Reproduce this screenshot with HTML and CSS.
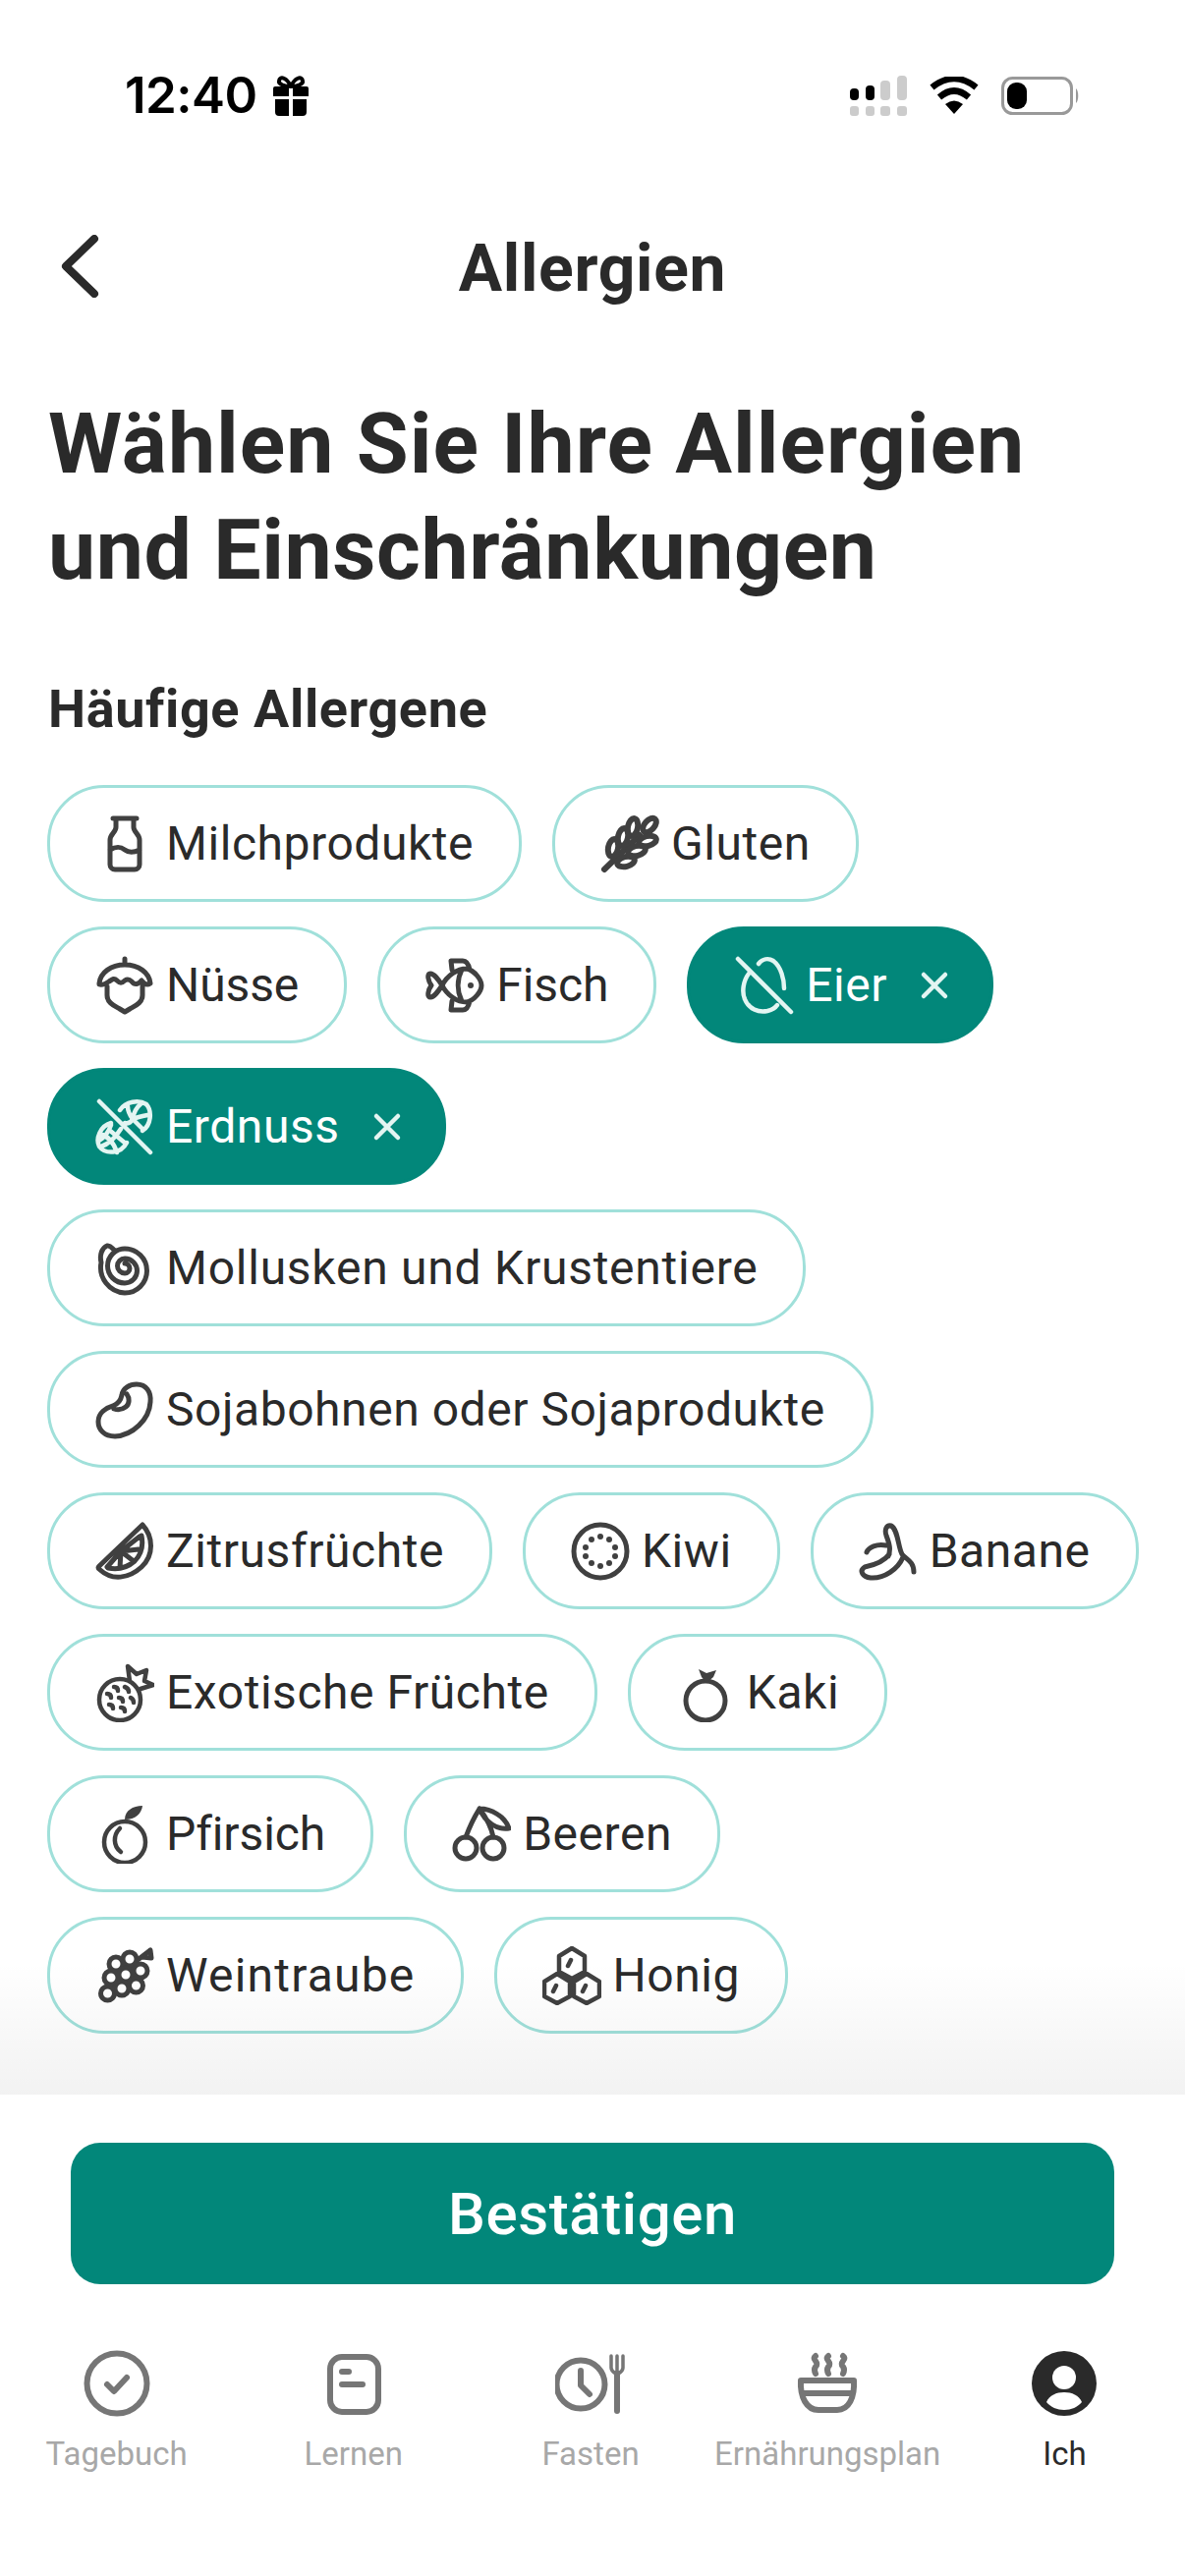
FILE: index.html
```html
<!DOCTYPE html>
<html lang="de">
<head>
<meta charset="utf-8">
<title>Allergien</title>
<link rel="stylesheet" href="styles.css">
</head>
<body>
<div class="page">
  <div class="status">
    <div class="status-left">
      <span class="time">12:40</span>
      <svg class="gift" viewBox="0 0 38 42"><path class="gift-loop" d="M19 12C15 3 8 1 7 6c-1 4 6 6 12 6zM19 12c4-9 11-11 12-6 1 4-6 6-12 6z"/><path d="M1 14a2 2 0 0 1 2-2h14v10H1zM21 12h14a2 2 0 0 1 2 2v8H21zM3 25h14v17H7a4 4 0 0 1-4-4zM21 25h14v13a4 4 0 0 1-4 4H21z"/></svg>
    </div>
    <div class="status-right">
      <svg class="signal" viewBox="0 0 58 41"><rect x="0" y="13" width="9" height="12" rx="4"/><rect x="16" y="10" width="9" height="15" rx="4"/><rect class="off" x="31" y="5" width="10" height="20" rx="4"/><rect class="off" x="48" y="0" width="10" height="25" rx="4"/><rect class="off" x="0" y="31" width="9" height="10" rx="3"/><rect class="off" x="16" y="31" width="9" height="10" rx="3"/><rect class="off" x="31" y="31" width="10" height="10" rx="3"/><rect class="off" x="48" y="31" width="10" height="10" rx="3"/></svg>
      <svg class="wifi" viewBox="0 0 50 38"><path d="M25 38 16 28Q25 21 34 28Z"/><path class="arc" d="M10 21Q25 8 40 21"/><path class="arc" d="M2.500 11Q25-7 47.500 11"/></svg>
      <svg class="battery" viewBox="0 0 81 39"><rect class="shell" x="1.500" y="1.500" width="70" height="36" rx="10"/><rect x="6" y="6" width="20" height="27" rx="9"/><path class="nub" d="M76 12c3 2 3 13 0 15z"/></svg>
    </div>
  </div>

  <header class="nav">
    <svg class="back" viewBox="0 0 40 64"><path d="M35 4 6 32l29 28"/></svg>
    <span class="nav-title">Allergien</span>
  </header>

  <main class="content">
    <h1 class="headline">Wählen Sie Ihre Allergien<br><span class="headline-b">und Einschränkungen</span></h1>
    <h2 class="section">Häufige Allergene</h2>
    <div class="chips">
      <div class="chip"><svg class="ico" viewBox="0 0 60 60"><path d="M18 4h24M21 5v8c0 5-6 7-6 13v25a5 5 0 0 0 5 5h20a5 5 0 0 0 5-5V26c0-6-6-8-6-13V5M15 36c7-4 11-3 15 0s9 3 15 0"/></svg><span>Milchprodukte</span></div>
      <div class="chip"><svg class="ico ico-thick" viewBox="0 0 60 60"><path d="M4 56 40 21"/><ellipse cx="50" cy="11" rx="5" ry="8.500" transform="rotate(42 50 11)"/><ellipse cx="33" cy="13" rx="5" ry="9" transform="rotate(12 33 13)"/><ellipse cx="48" cy="27" rx="5" ry="9" transform="rotate(76 48 27)"/><ellipse cx="23" cy="23" rx="5" ry="9" transform="rotate(12 23 23)"/><ellipse cx="37" cy="37" rx="5" ry="9" transform="rotate(76 37 37)"/><ellipse cx="13" cy="34" rx="5" ry="9" transform="rotate(12 13 34)"/><ellipse cx="26" cy="48" rx="5" ry="9" transform="rotate(76 26 48)"/></svg><span>Gluten</span></div>
      <div class="chip ls-tight"><svg class="ico" viewBox="0 0 60 60"><path d="M30 3v6M4 28C5 17 16 9 30 9s25 8 26 19c-3 2-6 1-9-3-3 4-7 5-10 1-2-2-4-3-7-1-3 3-5 3-8 0-3-3-5-1-8 1-3 2-7 4-10 3zM12 31v9c0 8 8 11 13 14l5 3 5-3c5-3 13-6 13-14v-9"/></svg><span>Nüsse</span></div>
      <div class="chip ls-tight"><svg class="ico" viewBox="0 0 60 60"><path d="M17 30C13 24 9 18 5 18 1 18 3 26 6 30 3 34 1 42 5 42c4 0 8-6 12-12zM17 30c5-10 15-17 25-17 8 2 15 11 15 17s-7 15-15 17c-10 0-20-7-25-17zM37 14c-5 10-5 22 0 32M27 14l-1-9h12c4 0 6 4 7 9M27 46l-1 9h12c4 0 6-4 7-9"/><circle class="fill" cx="46" cy="30" r="3"/></svg><span>Fisch</span></div>
      <div class="chip chip-on"><svg class="ico" viewBox="0 0 60 60"><path d="M3 3l54 54M24 8c4-5 10-6 15-3 8 6 11 19 11 28M14 18c-6 8-7 19-4 26 4 10 14 14 23 12 4-1 8-3 10-6"/></svg><span>Eier</span><svg class="x" viewBox="0 0 36 36"><path d="M7 7l22 22M29 7 7 29"/></svg></div>
      <div class="chip chip-on"><svg class="ico" viewBox="0 0 60 60"><path d="M4 4l52 52M25 13C31 4 44 2 52 7c6 7 5 21-4 27M33 9c0 5 2 9 5 13l9 9M47 6c-5 4-8 9-9 16-2 4-5 5-8 4M53 18c-5 1-10 2-15 4M16 26C5 29 0 42 4 50c6 8 22 8 28-4M5 37c7 2 13 7 17 19M16 28c-2 6-6 12-12 16M26 32c-5 8-11 15-20 18M14 33l17 14"/></svg><span>Erdnuss</span><svg class="x" viewBox="0 0 36 36"><path d="M7 7l22 22M29 7 7 29"/></svg></div>
      <div class="chip ls-mid"><svg class="ico" viewBox="0 0 60 60"><path d="M30 25A5 5 0 0 1 30 35 7.500 7.500 0 0 1 30 20 12.500 12.500 0 0 1 30 45 17.500 17.500 0 0 1 30 10 22.500 22.500 0 0 1 30 55 26 26 0 0 1 6 24C4 16 7 9 12 7c4-1 5 3 8 5"/></svg><span>Mollusken und Krustentiere</span></div>
      <div class="chip"><svg class="ico" viewBox="0 0 60 60"><path d="M42 4c10 0 15 8 14 18-1 18-18 34-36 35C9 57 3 50 3 42c0-9 8-14 15-16 5-2 8-6 9-11 1-7 8-11 15-11zM32 14c3 4 3 10-1 13-4 3-9 3-12 2"/></svg><span>Sojabohnen oder Sojaprodukte</span></div>
      <div class="chip"><svg class="ico" viewBox="0 0 60 60"><path d="M48 3c11 12 12 31-1 43C34 58 17 60 5 49c-3-2-2-3-1-4zM47 14c2 10 0 19-7 26-8 7-17 9-27 7M26 30 12 46M26 30l-1 17M26 30l13 10M26 30l18-2M26 30l19-15"/></svg><span>Zitrusfrüchte</span></div>
      <div class="chip"><svg class="ico" viewBox="0 0 60 60"><circle cx="30" cy="30" r="27"/><g class="fill"><circle cx="30" cy="15" r="3"/><circle cx="39" cy="18" r="3"/><circle cx="45" cy="26" r="3"/><circle cx="45" cy="35" r="3"/><circle cx="39" cy="42" r="3"/><circle cx="30" cy="45" r="3"/><circle cx="21" cy="42" r="3"/><circle cx="15" cy="35" r="3"/><circle cx="15" cy="26" r="3"/><circle cx="21" cy="18" r="3"/></g></svg><span>Kiwi</span></div>
      <div class="chip"><svg class="ico" viewBox="0 0 60 60"><path d="M56 51c0-11-8-13-12-18-4-7-4-25-11-29-5-1-7 4-5 10 3 8 5 14 2 21M8 31c2-5 10-9 20-7M45 36c-5 12-19 22-33 21-8-1-12-7-6-11 10-2 20-6 25-13"/></svg><span>Banane</span></div>
      <div class="chip"><svg class="ico ico-thin" viewBox="0 0 60 60"><circle cx="25" cy="37" r="21"/><path d="M35 18 33 3l9 8 10-4-2 11 9 4-13 4M19 24c3 0 4 2 4 4M30 24c3 1 4 3 4 5M12 31c3 0 4 2 4 4M24 35c3 0 4 2 4 4M36 35c2 1 3 3 3 5M14 42c3 0 4 2 4 4M26 45c3 0 4 2 4 4"/></svg><span>Exotische Früchte</span></div>
      <div class="chip"><svg class="ico" viewBox="0 0 60 60"><circle cx="30" cy="38" r="20"/><path class="fill" d="M23 6l8 4 10-3-3 7-7 6-5-6z"/></svg><span>Kaki</span></div>
      <div class="chip ls-tight"><svg class="ico ico-thin" viewBox="0 0 60 60"><circle cx="30" cy="38" r="21"/><path d="M25 24c-7 7-7 18 1 24"/><path class="fill" d="M30 15C30 6 38 1 48 1c-1 8-7 14-18 14z"/></svg><span>Pfirsich</span></div>
      <div class="chip"><svg class="ico" viewBox="0 0 60 60"><circle cx="14" cy="44" r="11"/><circle cx="42" cy="44" r="11"/><path d="M14 33C18 22 23 12 28 4M42 33C40 22 34 12 28 4M28 4c12 0 26 8 30 20-12 2-24-6-30-20z"/></svg><span>Beeren</span></div>
      <div class="chip ls-wide"><svg class="ico" viewBox="0 0 60 60"><circle cx="21" cy="18" r="7"/><circle cx="35" cy="13" r="7"/><circle cx="16" cy="32" r="7"/><circle cx="31" cy="29" r="7"/><circle cx="46" cy="25" r="7"/><circle cx="12.500" cy="48" r="7"/><circle cx="27" cy="43" r="7"/><circle cx="41.500" cy="40" r="7"/><path d="M43 14 56 4M48 11l9 1-1-8"/></svg><span>Weintraube</span></div>
      <div class="chip"><svg class="ico ico-thin" viewBox="0 0 60 60"><path d="M30 2 43 10v16l-13 7-13-7V10zM15 28l13 8v15l-13 7-13-7V36zM45 28l13 8v15l-13 7-13-7V36zM26 20l3-6M11 46l3-6M41 46l3-6"/></svg><span>Honig</span></div>
    </div>
  </main>

  <footer class="footer">
    <button class="confirm">Bestätigen</button>
    <nav class="tabs">
      <div class="tab"><svg class="tab-ico" viewBox="0 0 72 72"><circle cx="36" cy="36" r="30.500"/><path d="M26 37l7 7 13-14"/></svg><span>Tagebuch</span></div>
      <div class="tab"><svg class="tab-ico" viewBox="0 0 72 72"><rect x="12" y="9" width="49" height="56" rx="12"/><path d="M24 24h7M24 37h21"/></svg><span>Lernen</span></div>
      <div class="tab"><svg class="tab-ico" viewBox="0 0 72 72"><circle cx="26" cy="37" r="24.500"/><path d="M26 23v15l9 9"/><path class="tine" d="M57 8v12c0 4 3 5 6 7M63 8v18M69 8v12c0 4-3 5-6 7"/><path d="M63 27v37"/></svg><span>Fasten</span></div>
      <div class="tab"><svg class="tab-ico" viewBox="0 0 72 72"><path d="M24 8c-5 4 5 6 0 11-2 3-1 5 0 7M37 8c-5 4 5 6 0 11-2 3-1 5 0 7M52 8c5 4-5 6 0 11 2 3 1 5 0 7M9 33h54c1 17-5 30-17 30H27C15 63 8 50 9 33zM10 46h52"/></svg><span>Ernährungsplan</span></div>
      <div class="tab tab-on"><svg class="tab-ico" viewBox="0 0 72 72"><circle class="me" cx="36" cy="36" r="33"/><circle class="me-w" cx="36" cy="30" r="12"/><path class="me-w" d="M18 55c3-7 10-10 18-10s15 3 18 10c-4 5-11 8-18 8s-14-3-18-8z"/></svg><span>Ich</span></div>
    </nav>
  </footer>
</div>
</body>
</html>
```

FILE: styles.css
```css
* { box-sizing: border-box; }
html, body { margin: 0; padding: 0; background: #fff; }
body { font-family: Roboto, "Noto Sans", sans-serif; color: #2a2a2a; }
.page { width: 1206px; height: 2622px; display: flex; flex-direction: column; overflow: hidden; }

.status { height: 130px; padding: 76px 106px 0 127px; display: flex; justify-content: space-between; align-items: flex-start; }
.status-left { display: flex; align-items: flex-start; gap: 15px; }
.time { font-family: Inter, sans-serif; font-weight: 600; font-size: 51px; line-height: 42px; color: #000; letter-spacing: -0.5px; }
.gift { width: 38px; height: 42px; fill: #000; }
.gift-loop { fill: none; stroke: #000; stroke-width: 4; }
.status-right { display: flex; align-items: flex-start; gap: 23px; padding-top: 1px; }
.signal { width: 58px; height: 41px; fill: #000; }
.signal .off { fill: #ccc; }
.wifi { width: 50px; height: 38px; margin-top: 1px; fill: #000; }
.wifi .arc { fill: none; stroke: #000; stroke-width: 6.500; }
.battery { width: 81px; height: 39px; margin-top: 1px; fill: #000; }
.battery .shell { fill: none; stroke: #999; stroke-width: 3; }
.battery .nub { fill: #999; }

.nav { height: 114px; margin-top: 84px; position: relative; display: flex; align-items: center; justify-content: center; }
.back { position: absolute; left: 61px; top: 25px; width: 40px; height: 64px; fill: none; stroke: #2a2a2a; stroke-width: 8; stroke-linecap: round; stroke-linejoin: round; }
.nav-title { font-size: 66px; font-weight: 700; letter-spacing: 0.7px; padding-top: 4px; }

.content { flex: 1; padding: 0 0 0 48px; }
.headline { margin: 70px 0 0 1px; font-size: 86px; font-weight: 700; line-height: 108px; letter-spacing: 1px; }
.headline-b { letter-spacing: 0.55px; }
.section { margin: 72px 0 0 1px; font-size: 54px; line-height: 72px; font-weight: 700; letter-spacing: 0.6px; }
.chips { display: flex; flex-wrap: wrap; gap: 25px 31px; width: 1130px; margin-top: 41px; }
.chip { height: 119px; display: flex; align-items: center; gap: 12px; padding: 0 46px; border: 3px solid #a0e0da; border-radius: 58px; font-size: 48px; letter-spacing: 0.55px; line-height: 60px; }
.ls-tight { letter-spacing: -0.1px; }
.ls-mid { letter-spacing: 0.75px; }
.ls-wide { letter-spacing: 1.2px; }
.ico { width: 60px; height: 60px; flex: none; fill: none; stroke: #404040; stroke-width: 5; stroke-linecap: round; stroke-linejoin: round; }
.ico .fill { fill: #404040; stroke: none; }
.ico-thick { stroke-width: 6; }
.ico-thin { stroke-width: 4.500; }
.chip-on { background: #02877a; border-color: #02877a; color: #fff; padding-right: 39px; }
.chip-on .ico { stroke: #e3f5f2; stroke-width: 4.500; }
.x { width: 36px; height: 36px; margin-left: 18px; fill: none; stroke: #e3f5f2; stroke-width: 4.500; stroke-linecap: round; }

.footer { position: relative; height: 490px; background: #fff; padding: 49px 72px 0; }
.footer::before { content: ""; position: absolute; left: 0; right: 0; bottom: 100%; height: 135px; background: linear-gradient(to bottom, rgba(0,0,0,0), rgba(0,0,0,0.05)); pointer-events: none; }
.confirm { display: block; width: 100%; height: 144px; background: #02877a; color: #fff; border: 0; border-radius: 30px; font-family: inherit; font-size: 60px; font-weight: 500; letter-spacing: 0.6px; }
.tabs { display: flex; margin: 65px -70px 0 -74px; }
.tab { flex: 1; display: flex; flex-direction: column; align-items: center; font-size: 33px; line-height: 44px; color: #a8a8a8; }
.tab-ico { width: 72px; height: 72px; margin-bottom: 14px; fill: none; stroke: #767676; stroke-width: 6; stroke-linecap: round; stroke-linejoin: round; }
.tab-ico .tine { stroke-width: 3.500; }
.tab-on { color: #2a2a2a; }
.tab-ico .me { fill: #2a2a2a; stroke: none; }
.tab-ico .me-w { fill: #fff; stroke: none; }
```
